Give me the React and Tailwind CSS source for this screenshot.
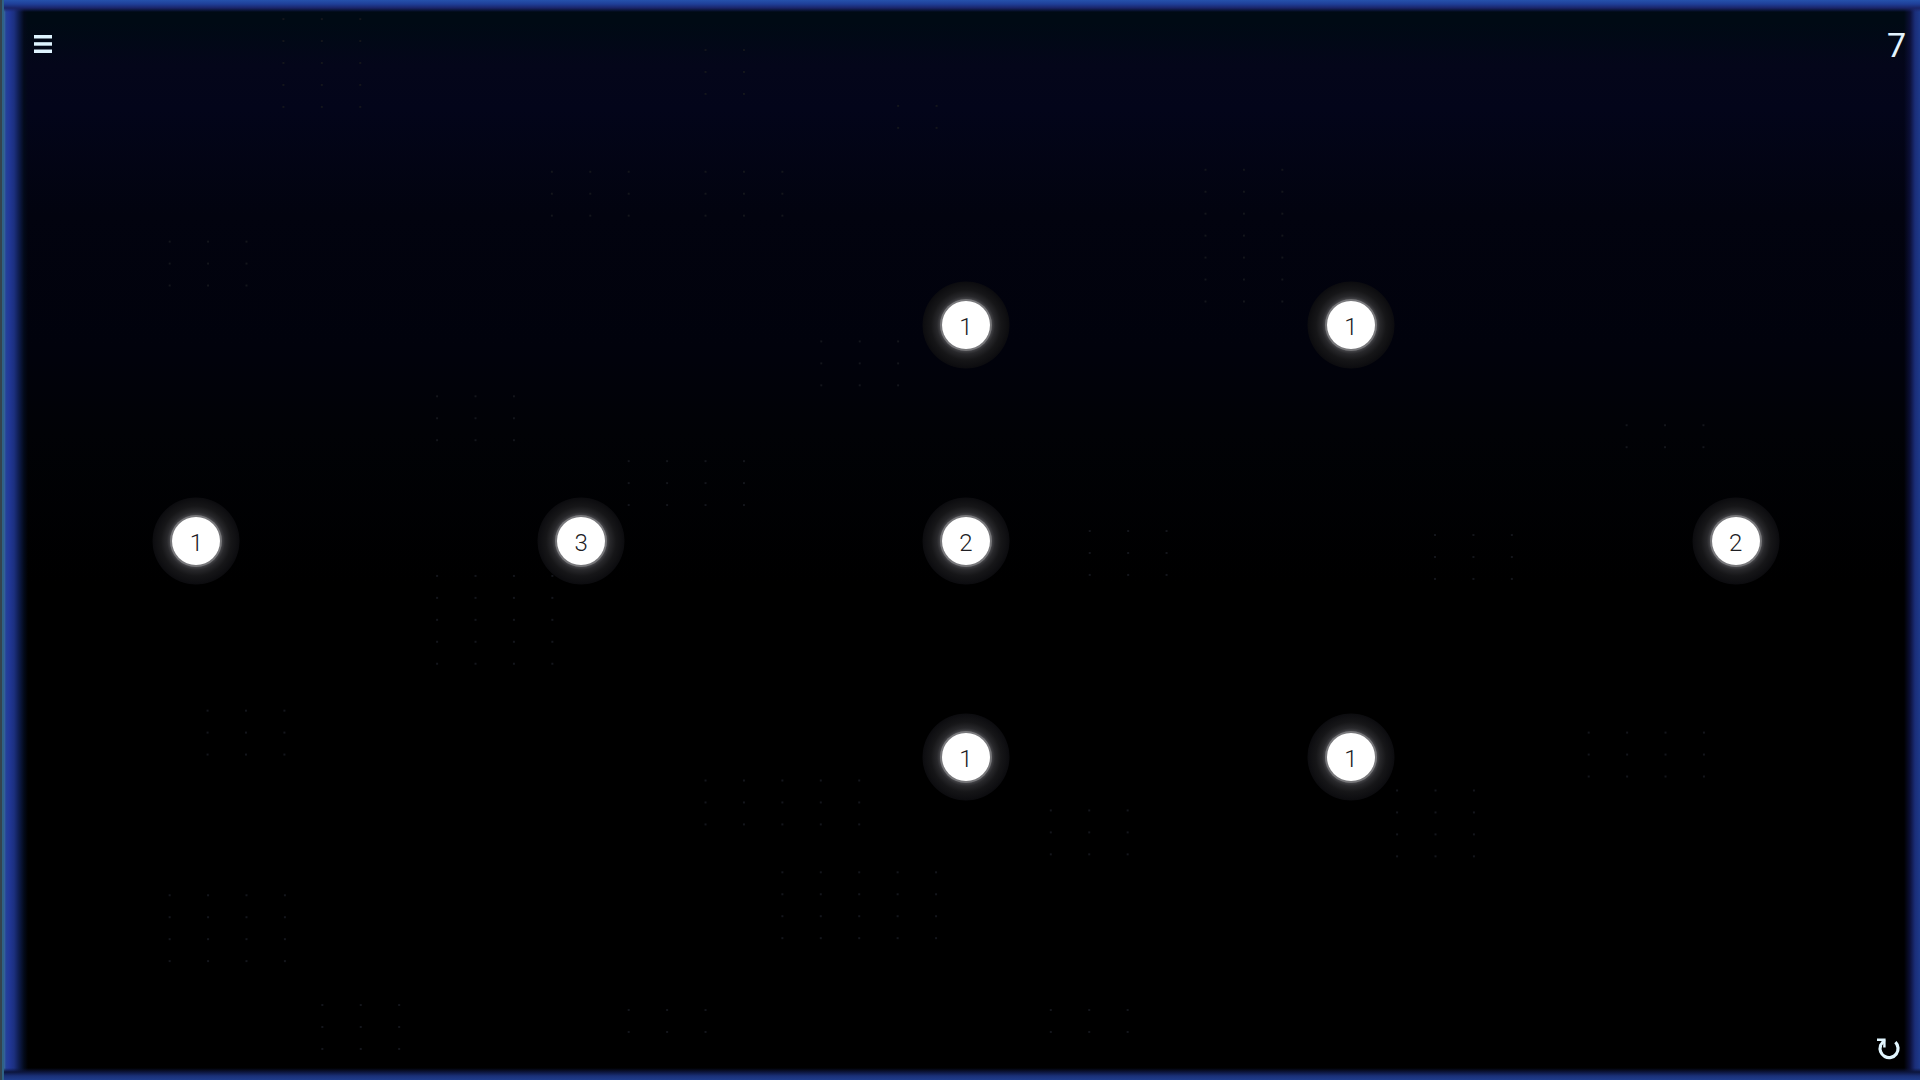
import { useState } from 'react'

// Board is five columns by five rows, the lists below hold the nodes of one level
const START_NODES = [
    { id: 'a', value: 1, place: 'col-start-3 row-start-2' },
    { id: 'b', value: 1, place: 'col-start-4 row-start-2' },
    { id: 'c', value: 1, place: 'col-start-1 row-start-3' },
    { id: 'd', value: 3, place: 'col-start-2 row-start-3' },
    { id: 'e', value: 2, place: 'col-start-3 row-start-3' },
    { id: 'f', value: 2, place: 'col-start-5 row-start-3' },
    { id: 'g', value: 1, place: 'col-start-3 row-start-4' },
    { id: 'h', value: 1, place: 'col-start-4 row-start-4' }
]

// Faint specks behind the board: [x, first y, columns, rows]
const SPECKS = [
    [279, 17, 3, 5], [702, 48, 2, 3], [895, 104, 2, 2], [548, 170, 3, 3],
    [702, 170, 3, 3], [1203, 168, 3, 7], [165, 240, 3, 3], [818, 340, 3, 3],
    [433, 395, 3, 3], [625, 460, 4, 3], [1625, 424, 3, 2], [1087, 530, 3, 3],
    [433, 575, 4, 5], [1433, 534, 3, 3], [203, 710, 3, 3], [702, 780, 5, 3],
    [1048, 810, 3, 3], [1395, 790, 3, 4], [779, 872, 5, 4], [165, 895, 4, 4],
    [1587, 732, 4, 3], [318, 1005, 3, 3], [625, 1010, 3, 2], [1048, 1010, 3, 2]
]

const Specks = () => (
    <svg className="pointer-events-none absolute inset-0 size-full" viewBox="0 0 1920 1080" fill="#14161c" aria-hidden="true">
        {SPECKS.map(([x, y, cols, rows]) =>
            Array.from({ length: cols * rows }, (_, i) => (
                <rect
                    key={`${x}-${y}-${i}`}
                    x={x + (i % cols) * 38.5}
                    y={y + Math.floor(i / cols) * 22}
                    width="2"
                    height="2"
                />
            ))
        )}
    </svg>
)

const Node = ({ node, selected, onSelect }) => (
    <button
        type="button"
        onClick={() => onSelect(node.id)}
        aria-pressed={selected}
        className={`${node.place} flex size-[88px] items-center justify-center place-self-center rounded-full bg-[radial-gradient(circle,#4c4c50_25px,#28282b_29px,#161618_35px,#0c0c0f_43px,transparent_44px)]`}
    >
        <span className="flex size-12 items-center justify-center rounded-full bg-white pt-1 text-2xl leading-6 font-light text-[#202024] shadow-[0_0_0_2px_#77777a]">
            {node.value}
        </span>
    </button>
)

const MenuIcon = () => (
    <svg viewBox="0 0 18 20" className="h-5 w-[18px]" fill="#dff4ff" aria-hidden="true">
        <rect x="0" y="1" width="18" height="3.5" />
        <rect x="0" y="8.2" width="18" height="3.5" />
        <rect x="0" y="15.5" width="18" height="3.5" />
    </svg>
)

const RestartIcon = () => (
    <svg viewBox="0 0 24 22" className="h-[22px] w-6" fill="none" stroke="#e2f6ff" aria-hidden="true">
        <path d="M4.6 7.5A9 9 0 1 0 19.4 4.2" strokeWidth="3.2" />
        <path d="M1 1.8H8.4V9.5" strokeWidth="2.4" />
        <path d="M8.4 1.8L4 8" strokeWidth="3" />
    </svg>
)

export default function App() {
    const [level] = useState(7)
    const [selected, setSelected] = useState(null)

    return (
        <main className="flex h-screen overflow-hidden bg-[#35434f] font-[Roboto,sans-serif]">
            {/* Window edge */}
            <div className="ml-0.5 w-0.5 shrink-0 bg-[#2f6386]" />

            <div className="relative min-w-0 flex-1 bg-[linear-gradient(#000a14_0px,#000a14_2%,#04061a_6%,#03051a_10%,#02030f_20%,#01020c_32%,#010206_40%,#000000_54%)]">
                <Specks />

                <div className="relative -mr-2 grid h-[calc(100%+2px)] grid-cols-5 grid-rows-5">
                    {START_NODES.map((node) => (
                        <Node
                            key={node.id}
                            node={node}
                            selected={selected === node.id}
                            onSelect={setSelected}
                        />
                    ))}
                </div>

                {/* Blue glow on the four sides */}
                <div className="pointer-events-none absolute inset-y-0 left-0 w-6 bg-[linear-gradient(to_right,#3a6a9c_0px,#23419a_2px,#22389a_5px,#1c3080_10px,#0e1c4c_15px,#030a1a_20px,transparent)]" />
                <div className="pointer-events-none absolute inset-y-0 right-0 w-4 bg-[linear-gradient(to_left,#1d3a8c_0px,#1a2d78_5px,#0c1038_10px,transparent)]" />
                <div className="pointer-events-none absolute inset-x-0 top-0 h-3 bg-[linear-gradient(#2552ac_0px,#1f3f98_4px,#1a2468_8px,transparent)]" />
                <div className="pointer-events-none absolute inset-x-0 bottom-0 h-3 bg-[linear-gradient(to_top,#1f3d8c_0px,#1a3078_4px,#0c153c_8px,transparent)]" />

                <button type="button" aria-label="Menu" className="absolute top-6 left-6 p-1.5 pt-2.5">
                    <MenuIcon />
                </button>
                <output aria-label="Level" className="absolute top-7 right-3.5 text-[34px] leading-[34px] text-[#e4f4ff]">
                    {level}
                </output>
                <button
                    type="button"
                    aria-label="Restart"
                    onClick={() => setSelected(null)}
                    className="absolute right-3.5 bottom-3.5 p-1.5"
                >
                    <RestartIcon />
                </button>
            </div>
        </main>
    )
}
